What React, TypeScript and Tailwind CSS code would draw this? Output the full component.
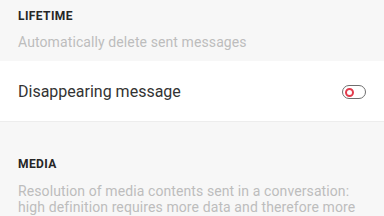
import React from "react";

export default function App() {
  return (
    <div
      className="w-[384px] h-[216px] overflow-hidden bg-[#f7f7f7]"
      style={{ fontFamily: "Roboto, 'Noto Sans', sans-serif" }}
    >
      <div className="h-[61px] px-[18px] pt-[10px]">
        <div className="text-[12px] leading-[13px] font-bold text-[#262626] tracking-[0.4px]">
          LIFETIME
        </div>
        <div className="mt-[11px] text-[14px] leading-[16px] tracking-[0.1px] text-[#bdbdbd]">
          Automatically delete sent messages
        </div>
      </div>
      <div className="h-[61px] bg-white px-[18px] pt-[2px] flex items-center justify-between border-b border-[#ededed]">
        <div className="text-[16px] text-[#333333]">Disappearing message</div>
        <div className="w-[24px] h-[14px] rounded-full border-[1.5px] border-[#6f6f6f] flex items-center pl-[1.5px]">
          <div className="w-[9px] h-[9px] rounded-full border-[2px] border-[#e23b4c] bg-white" />
        </div>
      </div>
      <div className="px-[18px] pt-[36px]">
        <div className="text-[12px] leading-[13px] font-bold text-[#262626] tracking-[0.4px]">MEDIA</div>
        <div className="mt-[12px] text-[14px] leading-[16px] tracking-[0.1px] text-[#bdbdbd]">
          Resolution of media contents sent in a conversation: high definition requires more data and therefore more
        </div>
      </div>
    </div>
  );
}
